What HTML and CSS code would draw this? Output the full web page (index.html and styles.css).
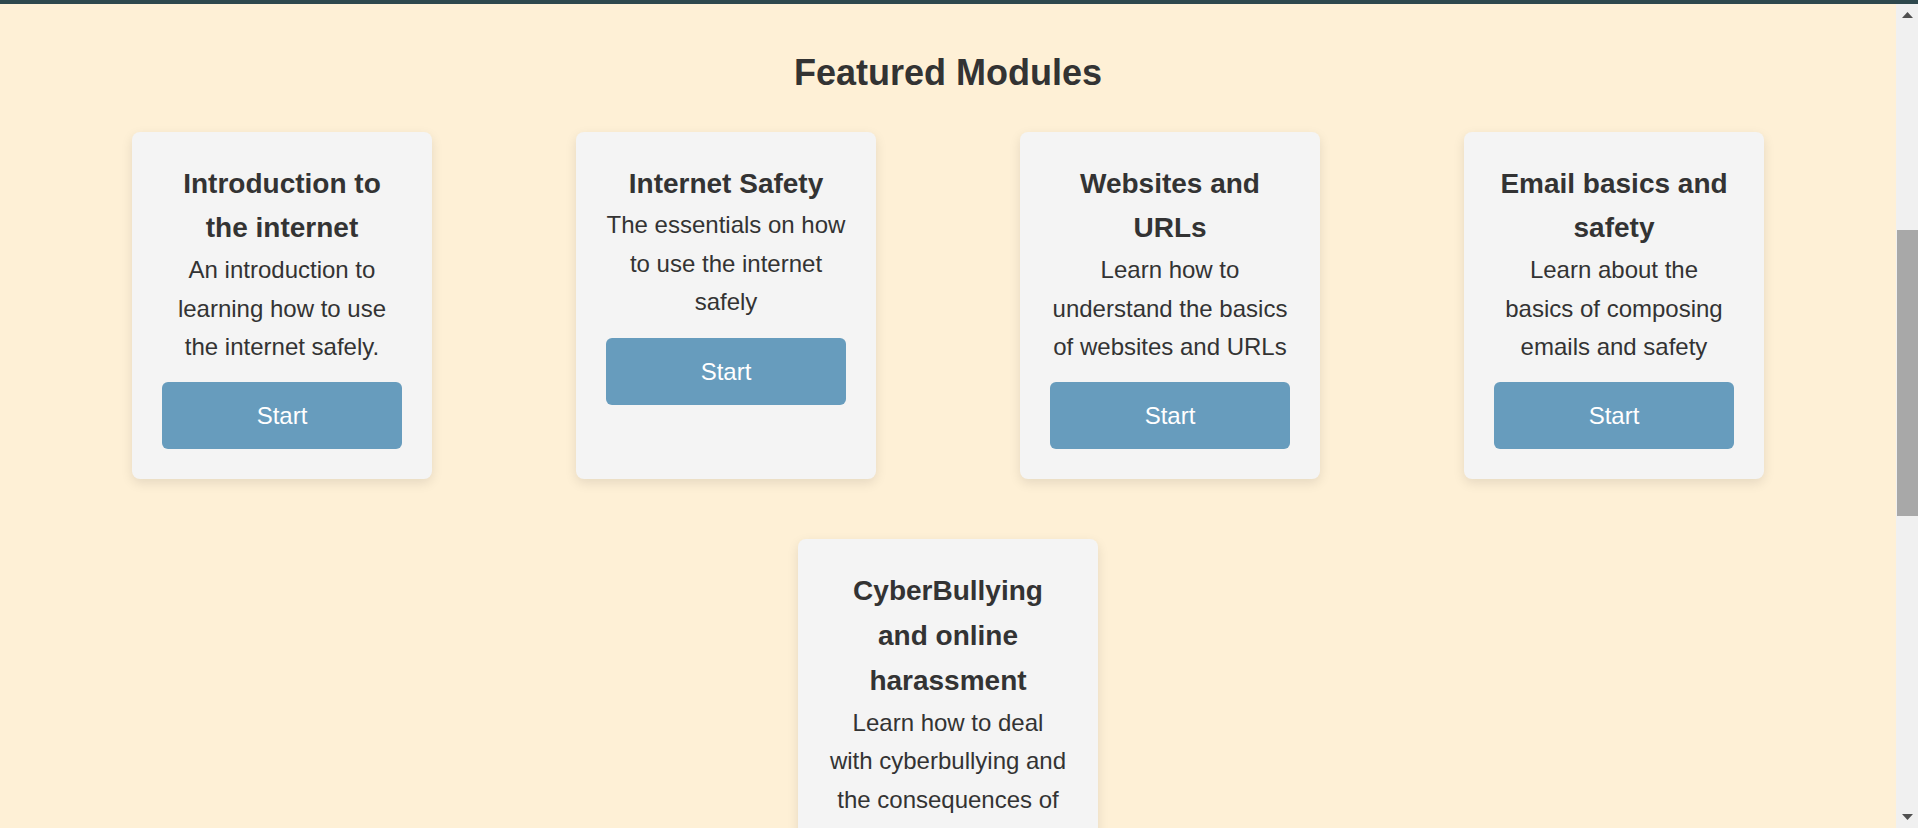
FILE: index.html
```html
<!DOCTYPE html>
<html lang="en">
<head>
<meta charset="utf-8">
<title>Featured Modules</title>
<link rel="stylesheet" href="styles.css">
</head>
<body>
<div class="window">
  <div class="topbar"></div>
  <div class="viewport">
    <main class="main">
      <section class="featured">
        <h2 class="featured-title">Featured Modules</h2>
        <div class="grid">
          <div class="card">
            <h3 class="card-title">Introduction to the internet</h3>
            <p class="card-text">An introduction to learning how to use the internet safely.</p>
            <a class="btn" href="#">Start</a>
          </div>
          <div class="card">
            <h3 class="card-title">Internet Safety</h3>
            <p class="card-text">The essentials on how to use the internet safely</p>
            <a class="btn" href="#">Start</a>
          </div>
          <div class="card">
            <h3 class="card-title">Websites and URLs</h3>
            <p class="card-text">Learn how to understand the basics of websites and URLs</p>
            <a class="btn" href="#">Start</a>
          </div>
          <div class="card">
            <h3 class="card-title">Email basics and safety</h3>
            <p class="card-text">Learn about the basics of composing emails and safety</p>
            <a class="btn" href="#">Start</a>
          </div>
          <div class="card">
            <h3 class="card-title">CyberBullying and online harassment</h3>
            <p class="card-text">Learn how to deal with cyberbullying and the consequences of cyberbullying.</p>
            <a class="btn" href="#">Start</a>
          </div>
        </div>
      </section>
    </main>
    <div class="scrollbar">
      <div class="sb-arrow">
        <svg width="11" height="6" viewBox="0 0 11 6"><polygon points="0,6 5.5,0 11,6" fill="#505050"/></svg>
      </div>
      <div class="sb-thumb"></div>
      <div class="sb-fill"></div>
      <div class="sb-arrow">
        <svg width="11" height="6" viewBox="0 0 11 6"><polygon points="0,0 11,0 5.5,6" fill="#505050"/></svg>
      </div>
    </div>
  </div>
</div>
</body>
</html>
```

FILE: styles.css
```css
* { box-sizing: border-box; }

html, body {
  margin: 0;
  padding: 0;
  height: 100%;
  overflow: hidden;
}

body {
  font-family: "Liberation Sans", Arial, sans-serif;
  color: #333;
  background: #fef0d6;
}

.window {
  display: flex;
  flex-direction: column;
  height: 100vh;
}

.topbar {
  height: 4px;
  flex: none;
  background: #2e484d;
}

.viewport {
  flex: 1;
  display: flex;
  min-height: 0;
}

.main {
  flex: 1;
  min-width: 0;
  overflow: hidden;
}

.featured {
  padding: 40px 60px 0;
}

.featured-title {
  margin: 0;
  font-size: 36px;
  font-weight: bold;
  line-height: 1.6;
  text-align: center;
}

.grid {
  display: flex;
  flex-wrap: wrap;
  justify-content: space-around;
}

.card {
  width: 300px;
  margin: 30px;
  padding: 30px;
  background: #f4f4f4;
  border-radius: 8px;
  box-shadow: 0 4px 12px rgba(0, 0, 0, 0.1);
  text-align: center;
}

.card-title {
  margin: 0;
  font-size: 28px;
  font-weight: bold;
  line-height: 1.6;
}

.card-text {
  margin: 0;
  font-size: 24px;
  line-height: 1.6;
}

.btn {
  display: block;
  margin-top: 16px;
  padding: 14px 0;
  font-size: 24px;
  line-height: 39px;
  color: #fff;
  text-decoration: none;
  background: #679cbd;
  border-radius: 6px;
}

.scrollbar {
  width: 22px;
  flex: none;
  background: #f0f0f0;
  display: flex;
  flex-direction: column;
  align-items: flex-end;
}

.sb-arrow {
  width: 22px;
  height: 22px;
  display: flex;
  align-items: center;
  justify-content: center;
}

.sb-thumb {
  width: 21px;
  height: 286px;
  margin-top: 204px;
  background: #a8a8a8;
}

.sb-fill {
  flex: 1;
}
```
